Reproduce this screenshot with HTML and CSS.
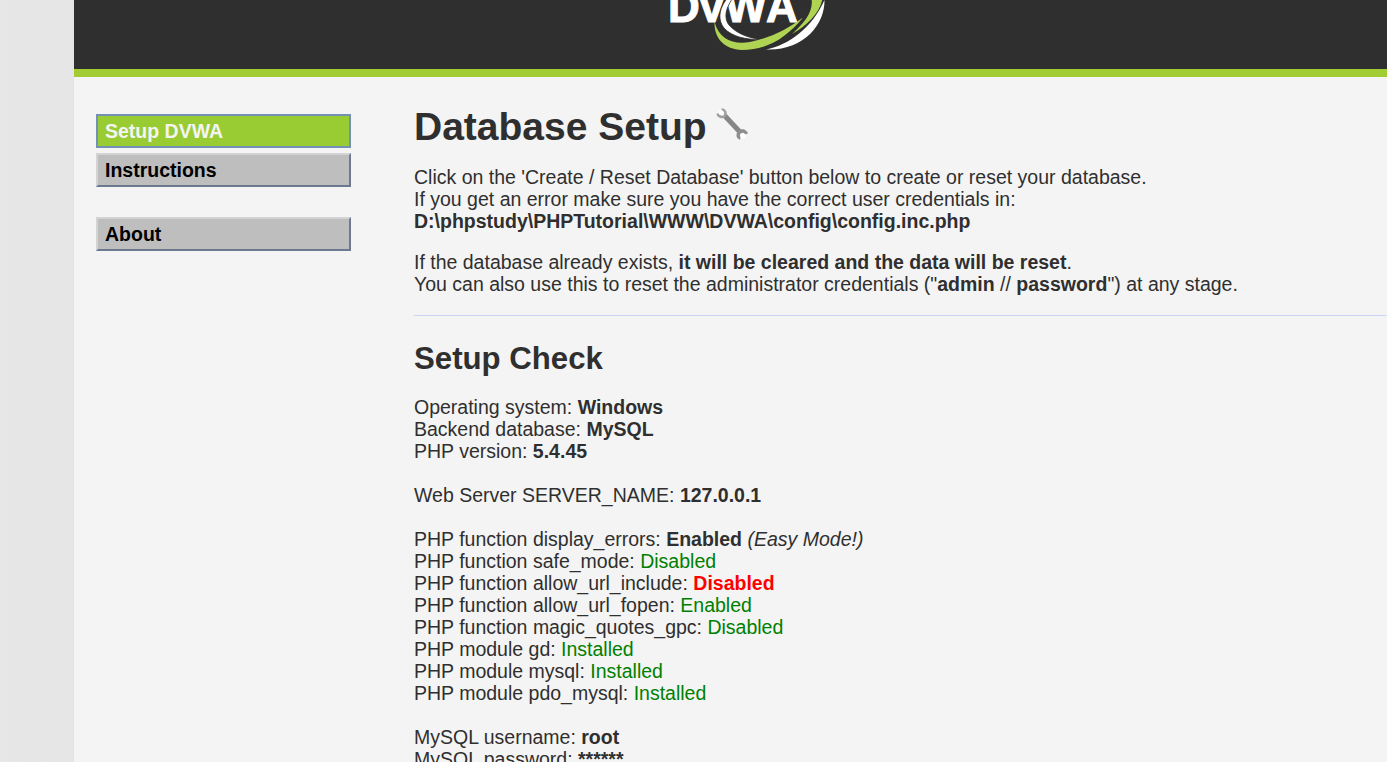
FILE: index.html
```html
<!DOCTYPE html>
<html lang="en">

<head>
    <meta charset="UTF-8">
    <title>Setup :: Damn Vulnerable Web Application (DVWA)</title>
    <link rel="stylesheet" href="styles.css">
</head>

<body>
    <div class="container">
        <div class="header">
            <svg class="logo" width="180" height="52" viewBox="660 0 180 52">
                <text class="logo-text" x="668 697 725 766" y="22">DVWA</text>
                <!-- thin white arc inside the ring -->
                <path d="M733 -8 C720 4 716 18 724 28 C732 37 746 39.500 760 39.500 C745 37 735 32 729 25 C723 17 726 6 736 -6 Z" fill="#fff" stroke="#2f2f2f" stroke-width="0.8" />
                <path d="M714.500 22 C719 39 733 45 750 42 C770 38 788 29 803 17.500 C787 37 768 50 742 50 C724 49 714 38 714.500 22 Z" fill="#afd454" />
                <path d="M811 -4 C815 11 804 23 792 34 C808 25 821 12 823 -4 Z" fill="#afd454" />
                <path d="M824.500 0 C825 25 803 51 766 49.500 C789 45 812 28 824.500 0 Z" fill="#fff" />
            </svg>
        </div>

        <div class="main">
            <div class="menu">
                <ul>
                    <li class="selected">Setup DVWA</li>
                    <li>Instructions</li>
                </ul>
                <ul>
                    <li>About</li>
                </ul>
            </div>

            <div class="content">
                <h1>Database Setup
                    <svg class="wrench" width="32" height="34" viewBox="0 0 32 34">
                        <path d="M8.500 8.500 L24 25" stroke="#868686" stroke-width="5" />
                        <path d="M5.500 2.500 Q9.500 3 9.500 6.500 Q9 10.500 5.500 10 Q2.500 9.500 1.500 6.500" fill="none" stroke="#a0a0a0" stroke-width="2.500" />
                        <circle cx="5" cy="5.500" r="2.500" fill="#fff" />
                        <path d="M24.500 31 Q21.500 30 22.500 26.500 Q24 23.500 27.500 24 Q29.500 25 30.500 27" fill="none" stroke="#8e8e8e" stroke-width="3.500" />
                        <circle cx="27" cy="29" r="2.800" fill="#fff" />
                    </svg>
                </h1>

                <p>Click on the 'Create / Reset Database' button below to create or reset your database.<br>
                    If you get an error make sure you have the correct user credentials in:<br>
                    <b>D:\phpstudy\PHPTutorial\WWW\DVWA\config\config.inc.php</b></p>

                <p>If the database already exists, <b>it will be cleared and the data will be reset</b>.<br>
                    You can also use this to reset the administrator credentials ("<b>admin</b> // <b>password</b>") at any stage.</p>

                <hr>

                <h2>Setup Check</h2>

                <p>Operating system: <b>Windows</b><br>
                    Backend database: <b>MySQL</b><br>
                    PHP version: <b>5.4.45</b><br>
                    <br>
                    Web Server SERVER_NAME: <b>127.0.0.1</b><br>
                    <br>
                    PHP function display_errors: <b>Enabled</b> <i>(Easy Mode!)</i><br>
                    PHP function safe_mode: <span class="success">Disabled</span><br>
                    PHP function allow_url_include: <span class="failure">Disabled</span><br>
                    PHP function allow_url_fopen: <span class="success">Enabled</span><br>
                    PHP function magic_quotes_gpc: <span class="success">Disabled</span><br>
                    PHP module gd: <span class="success">Installed</span><br>
                    PHP module mysql: <span class="success">Installed</span><br>
                    PHP module pdo_mysql: <span class="success">Installed</span><br>
                    <br>
                    MySQL username: <b>root</b><br>
                    MySQL password: <b>******</b></p>
            </div>
        </div>
    </div>
</body>

</html>
```
FILE: styles.css
```css
body {
    margin: 0;
    height: 762px;
    overflow: hidden;
    color: #2f2f2f;
    background: linear-gradient(to right, #e7e7e7, #e5e5e5 74px);
    font-family: "Liberation Sans", Arial, Helvetica, sans-serif;
    font-size: 19.5px;
    line-height: 22px;
}

.container {
    margin-left: 74px;
    height: 762px;
    background-color: #f4f4f4;
}

.header {
    height: 69px;
    background-color: #2f2f2f;
    border-bottom: 8px solid #a1cc33;
}

.logo {
    display: block;
    margin-left: 586px;
}

.logo-text {
    font-size: 44px;
    font-weight: bold;
    fill: #fff;
    stroke: #fff;
    stroke-width: 1px;
}

.main {
    display: flex;
}

.menu {
    width: 255px;
    padding: 37px 0 0 22px;
}

.menu ul {
    list-style: none;
    margin: 0 0 30px;
    padding: 0;
    display: grid;
    gap: 5px;
}

.menu li {
    box-sizing: border-box;
    height: 34px;
    padding: 4px 7px;
    border: 2px solid;
    border-color: #d3d3d3 #6c7991 #6c7991 #d3d3d3;
    background-color: #bebebe;
    color: #000;
    font-weight: bold;
}

.menu li.selected {
    border-color: #7390b5;
    background-color: #9c3;
    color: #f4f4f4;
}

.content {
    flex: 1;
    padding: 27px 0 0 63px;
}

h1 {
    margin: 0 0 17px;
    font-size: 39px;
    line-height: 45px;
}

h2 {
    margin: 0 0 19px;
    font-size: 31.2px;
    line-height: 36px;
}

p {
    margin: 0 0 19px;
    white-space: nowrap;
}

hr {
    margin: 20px 0 25px;
    border: 0;
    border-top: 1px solid #c8d7f4;
}

.wrench {
    margin-left: -1px;
    vertical-align: -1px;
}

.success {
    color: green;
}

.failure {
    color: red;
    font-weight: bold;
}
```
